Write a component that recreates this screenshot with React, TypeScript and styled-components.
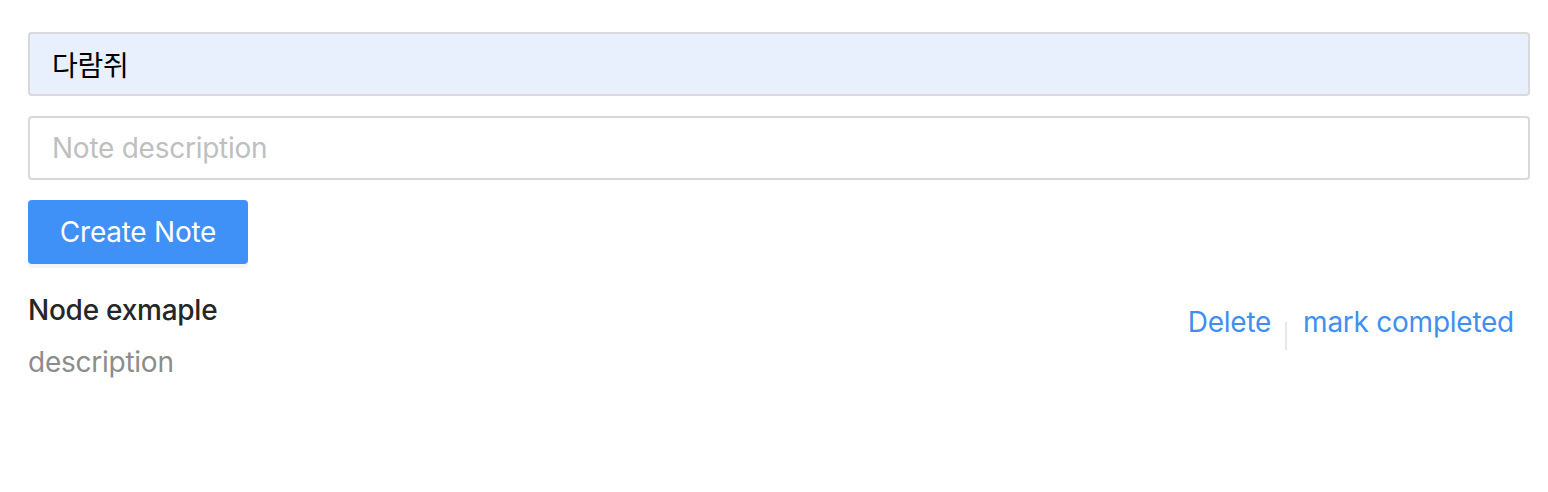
import React, { useState } from 'react';
import styled, { createGlobalStyle } from 'styled-components';

const GlobalStyle = createGlobalStyle`
  body {
    margin: 0;
    background: #ffffff;
    font-family: Inter, "Noto Sans CJK KR", "Noto Sans", sans-serif;
    letter-spacing: -0.25px;
  }
`;

const Page = styled.div`
  display: flex;
  flex-direction: column;
  gap: 20px;
  padding: 32px 18px 0 28px;
`;

const Input = styled.input<{ $filled?: boolean }>`
  box-sizing: border-box;
  width: 100%;
  height: 64px;
  padding: 0 22px;
  border: 2px solid #d9d9d9;
  border-radius: 4px;
  background: ${(p) => (p.$filled ? '#e8f0fe' : '#ffffff')};
  color: #000000;
  font-family: Inter, "Noto Sans CJK KR", sans-serif;
  font-size: 28px;
  letter-spacing: -0.25px;
  outline: none;

  &::placeholder {
    color: #bfbfbf;
  }
`;

const Button = styled.button`
  align-self: flex-start;
  width: 220px;
  height: 64px;
  padding: 0;
  border: none;
  border-radius: 4px;
  background: #4091f7;
  box-shadow: 0 4px 0 rgba(0, 0, 0, 0.045);
  color: #ffffff;
  font-family: Inter, sans-serif;
  font-size: 28px;
  letter-spacing: -0.25px;
  cursor: pointer;
`;

const List = styled.ul`
  margin: 0;
  padding: 0;
  list-style: none;
`;

const Item = styled.li`
  display: flex;
  align-items: flex-start;
  justify-content: space-between;
  padding: 4px 0 24px;
`;

const Meta = styled.div`
  display: flex;
  flex-direction: column;
  gap: 8px;
`;

const Title = styled.div`
  color: #262626;
  font-size: 28px;
  line-height: 44px;
  font-weight: 500;
`;

const Description = styled.div`
  color: #8c8c8c;
  font-size: 28px;
  line-height: 44px;
`;

const Actions = styled.ul`
  display: flex;
  margin: 12px 0 0 96px;
  padding: 0;
  list-style: none;
`;

const Action = styled.li<{ $divider?: boolean }>`
  position: relative;
  padding: 0 16px;
  font-size: 28px;
  line-height: 44px;

  &::after {
    content: '';
    display: ${(p) => (p.$divider ? 'block' : 'none')};
    position: absolute;
    top: 22px;
    right: 0;
    width: 2px;
    height: 28px;
    background: #e8e8e8;
  }
`;

const Link = styled.a`
  color: #3f8ff2;
  text-decoration: none;
  cursor: pointer;
`;

export default function App() {
  const [name, setName] = useState('다람쥐');
  const [desc, setDesc] = useState('');

  return (
    <>
      <GlobalStyle />
      <Page>
        <Input $filled value={name} onChange={(e) => setName(e.target.value)} />
        <Input
          placeholder="Note description"
          value={desc}
          onChange={(e) => setDesc(e.target.value)}
        />
        <Button>Create Note</Button>
        <List>
          <Item>
            <Meta>
              <Title>Node exmaple</Title>
              <Description>description</Description>
            </Meta>
            <Actions>
              <Action $divider>
                <Link>Delete</Link>
              </Action>
              <Action>
                <Link>mark completed</Link>
              </Action>
            </Actions>
          </Item>
        </List>
      </Page>
    </>
  );
}
